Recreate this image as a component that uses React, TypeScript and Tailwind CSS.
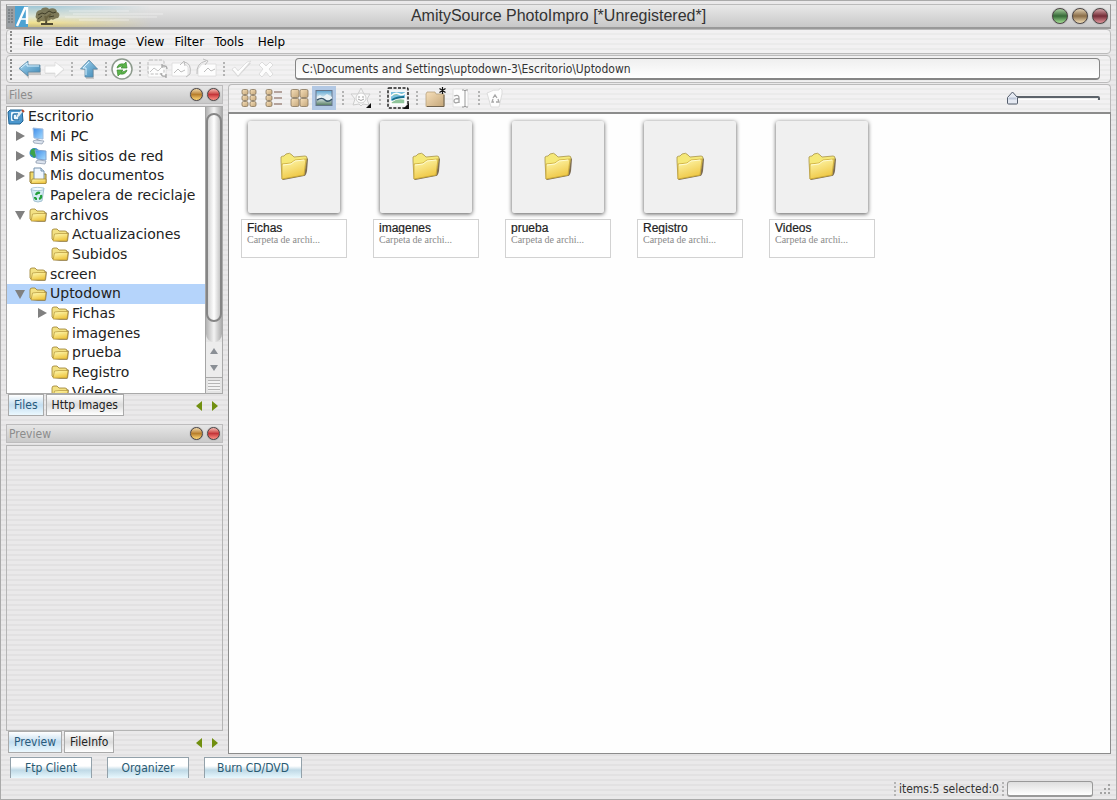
import type { ReactNode } from "react";
import clsx from "clsx";

const stripes =
  "bg-[repeating-linear-gradient(to_bottom,#eae9ea_0px,#eae9ea_3px,#e2e1e2_3px,#e2e1e2_5px)]";
const lightStripes =
  "bg-[repeating-linear-gradient(to_bottom,#f2f1f2_0px,#f2f1f2_3px,#ebebeb_3px,#ebebeb_5px)]";
const tahoma = "font-['DejaVu_Sans_Condensed','DejaVu_Sans',sans-serif]";

/* Gradients shared by all icons */
function IconDefs() {
  return (
    <svg className="absolute size-0" aria-hidden="true">
      <defs>
        <linearGradient id="gold" x1="0" y1="0" x2="0.4" y2="1">
          <stop offset="0" stopColor="#fffbb4" />
          <stop offset="1" stopColor="#efc744" />
        </linearGradient>
        <linearGradient id="blue" x1="0" y1="0" x2="1" y2="1">
          <stop offset="0" stopColor="#a9d8f2" />
          <stop offset="1" stopColor="#3d87b5" />
        </linearGradient>
        <linearGradient id="screen" x1="0" y1="0" x2="1" y2="1">
          <stop offset="0" stopColor="#3d8be8" />
          <stop offset="1" stopColor="#a6dcff" />
        </linearGradient>
        <linearGradient id="tan" x1="0" y1="0" x2="1" y2="1">
          <stop offset="0" stopColor="#f7e0bb" />
          <stop offset="1" stopColor="#c4a679" />
        </linearGradient>
        <linearGradient id="sky" x1="0" y1="0" x2="0" y2="1">
          <stop offset="0" stopColor="#5ba3d0" />
          <stop offset="0.5" stopColor="#e5f1f4" />
          <stop offset="1" stopColor="#51785c" />
        </linearGradient>
      </defs>
    </svg>
  );
}

function Logo() {
  return (
    <svg viewBox="0 0 160 21" className="h-[21px] w-40" aria-hidden="true">
      <defs>
        <linearGradient id="sunset" x1="0" y1="0" x2="0" y2="1">
          <stop offset="0" stopColor="#9fc6d6" />
          <stop offset="0.5" stopColor="#dfe6d6" />
          <stop offset="0.8" stopColor="#f0e08f" />
          <stop offset="1" stopColor="#c9bd80" />
        </linearGradient>
        <linearGradient id="fade" x1="0" y1="0" x2="1" y2="0">
          <stop offset="0.2" stopColor="#fff" />
          <stop offset="0.9" stopColor="#000" />
        </linearGradient>
        <mask id="fadeMask">
          <rect width="160" height="21" fill="url(#fade)" />
        </mask>
      </defs>
      <rect width="160" height="21" fill="url(#sunset)" mask="url(#fadeMask)" />
      <path d="M62 5h60M66 8h90M58 11h92M72 14h50" stroke="#fff" opacity=".45" />
      <rect width="8" height="21" fill="#9a9fa3" />
      <path d="M2 3v15M5 3v15" stroke="#62686d" strokeDasharray="2 1" />
      <rect x="8" width="13" height="21" fill="#4da3d2" />
      <path d="M10 20 18 2h2v16" stroke="#fff" strokeWidth="2.400" fill="none" />
      <path d="M14 13h6" stroke="#fff" strokeWidth="1.600" />
      <path d="M39 18c1-3 0-5-1-8M39 13c1-3 3-3 5-5M34 18h12" stroke="#504a30" strokeWidth="2" fill="none" />
      <path
        d="M29 9c0-4 3-5 5-5 1-3 6-3 8-1 4-2 8 0 8 3 3 1 3 4 1 6-3 0-5 3-7 1-2 3-4 1-6 2-2 1-4-1-5 1-3 1-4-1-3-3-1-1-2-2-1-4z"
        fill="#6d6643"
        opacity=".85"
      />
      <path d="M31 9l4-2 3 1 4-3 4 2 3-1M31 13l4-3M42 11l5-1" stroke="#3f3d28" fill="none" />
    </svg>
  );
}

function Folder({ className = "h-4 w-[18px]" }: { className?: string }) {
  return (
    <svg viewBox="0 0 18 16" className={className} aria-hidden="true">
      <path d="M2 15h14l1-1 1-8-2-1v8z" fill="#766339" opacity=".7" />
      <path d="M1 4q0-2 2-2h3l2 2h6q2 0 2 2v7H2L1 12z" fill="#f3e184" stroke="#9a7e2c" strokeWidth=".8" />
      <path d="M2 14 3.500 7 8 6.500h9L16 14z" fill="url(#gold)" stroke="#b3943a" strokeWidth=".7" />
    </svg>
  );
}

function BigFolder() {
  return (
    <svg viewBox="0 0 30 30" className="size-[30px]" aria-hidden="true">
      <path d="m4 28 21-4q2 0 3-5l1-12-2-2-2 17-22 5z" fill="#5f4a2a" opacity=".8" />
      <path d="M2 9V5q1-1 3-1l2-2q4-2 6 1l2 2 11-1q2 0 2 2l-3 17L3 27 2 9z" fill="#f5e878" stroke="#a8944a" strokeWidth=".8" />
      <path d="m3 27 0-15 9-1 4-3 11-1-2 16z" fill="url(#gold)" stroke="#c9a737" strokeWidth=".8" />
      <path d="m4 13 8-1 4-3 9-1" stroke="#fffbd0" fill="none" />
    </svg>
  );
}

function DesktopIcon() {
  return (
    <svg viewBox="0 0 18 18" className="size-[18px]" aria-hidden="true">
      <path d="M3 2h12l1 11-3 3H2L1 4z" fill="#4b98cf" stroke="#226493" />
      <rect x="4" y="4" width="9" height="9" rx="1" fill="#eaf7ff" />
      <path d="M11 6H7q-1 0-1 2v2q0 2 2 2h4V8H9" stroke="#2673ab" strokeWidth="1.500" fill="none" />
      <path d="m10 9 5-6" stroke="#e4ecf0" strokeWidth="2" />
      <path d="m15 2 2 2" stroke="#b5482a" strokeWidth="2" />
    </svg>
  );
}

function ComputerIcon() {
  return (
    <svg viewBox="0 0 18 18" className="size-[18px]" aria-hidden="true">
      <path d="m4 1 10 1v10l-9-1z" fill="url(#screen)" stroke="#9dbbe0" />
      <path d="m8 12 3 1 1 2-6-1z" fill="#8f9fb8" />
      <path d="m4 14 3-1 8 1-2 3-8-1z" fill="#dbe3ee" stroke="#8593a8" strokeWidth=".7" />
    </svg>
  );
}

function NetworkIcon() {
  return (
    <svg viewBox="0 0 18 18" className="size-[18px]" aria-hidden="true">
      <circle cx="5.500" cy="6" r="5" fill="#3489c6" />
      <path d="M2 3q3-3 5 0l-1 3 2 1-3 4-2-3-2-1z" fill="#3ca34a" />
      <path d="m6 3 11 1v9l-9-1z" fill="url(#screen)" stroke="#7fa3d0" />
      <path d="m7 14 3-1 7 1-1 3-9-1z" fill="#dbe3ee" stroke="#8593a8" strokeWidth=".7" />
    </svg>
  );
}

function DocumentsIcon() {
  return (
    <svg viewBox="0 0 18 18" className="size-[18px]" aria-hidden="true">
      <path d="M1 5h4l1 2h11v9H2l-1-1z" fill="#efd96a" stroke="#8f762d" />
      <path d="M5 1h7l3 3v9H5z" fill="#f0f7ff" stroke="#7793ad" />
      <path d="M12 1v3h3" fill="#cde2f5" stroke="#7793ad" />
      <path d="M2 16.500 3 12h14v4.500z" fill="url(#gold)" stroke="#a88a30" strokeWidth=".8" />
    </svg>
  );
}

function BinIcon() {
  return (
    <svg viewBox="0 0 18 18" className="size-[18px]" aria-hidden="true">
      <path d="m2 3 13-1-2 13q-4 2-8 0z" fill="#d5ebf4" stroke="#93b5c8" strokeWidth=".8" />
      <ellipse cx="8.500" cy="3" rx="6.500" ry="1.600" fill="#f2fbff" stroke="#93b5c8" strokeWidth=".7" />
      <path d="M7 9q1-3 4-2M12 9q1 3-2 4M8 13q-2 0-2-2" stroke="#25a03c" strokeWidth="2.200" fill="none" />
    </svg>
  );
}

type TreeNode = {
  label: string;
  icon: ReactNode;
  indent: string;
  arrow?: "right" | "down";
  selected?: boolean;
};

const tree: TreeNode[] = [
  { label: "Escritorio", icon: <DesktopIcon />, indent: "pl-0" },
  { label: "Mi PC", icon: <ComputerIcon />, indent: "pl-2", arrow: "right" },
  { label: "Mis sitios de red", icon: <NetworkIcon />, indent: "pl-2", arrow: "right" },
  { label: "Mis documentos", icon: <DocumentsIcon />, indent: "pl-2", arrow: "right" },
  { label: "Papelera de reciclaje", icon: <BinIcon />, indent: "pl-[22px]" },
  { label: "archivos", icon: <Folder />, indent: "pl-2", arrow: "down" },
  { label: "Actualizaciones", icon: <Folder />, indent: "pl-11" },
  { label: "Subidos", icon: <Folder />, indent: "pl-11" },
  { label: "screen", icon: <Folder />, indent: "pl-[22px]" },
  { label: "Uptodown", icon: <Folder />, indent: "pl-2", arrow: "down", selected: true },
  { label: "Fichas", icon: <Folder />, indent: "pl-[30px]", arrow: "right" },
  { label: "imagenes", icon: <Folder />, indent: "pl-11" },
  { label: "prueba", icon: <Folder />, indent: "pl-11" },
  { label: "Registro", icon: <Folder />, indent: "pl-11" },
  { label: "Videos", icon: <Folder />, indent: "pl-11" },
];

function TreeRow({ node }: { node: TreeNode }) {
  return (
    <li className={clsx("flex min-h-0", node.selected && "bg-[#b5d4fb]")}>
      <button
        type="button"
        className={clsx("flex min-h-0 w-full items-center whitespace-nowrap text-left", node.indent)}
      >
        {node.arrow && (
          <svg viewBox="0 0 10 10" className="mr-1 size-[10px] shrink-0" aria-hidden="true">
            <path d={node.arrow === "right" ? "M1 0v10l9-5z" : "M0 1h10L5 10z"} fill="#808080" />
          </svg>
        )}
        <span className="flex w-[21px] shrink-0">{node.icon}</span>
        {node.label}
      </button>
    </li>
  );
}

function Orb({ label, className }: { label: string; className: string }) {
  return (
    <button
      type="button"
      aria-label={label}
      className={clsx("rounded-full border border-[#4b4444] shadow-[0_0_1px_#666]", className)}
    />
  );
}

function PanelHeader({ title }: { title: string }) {
  return (
    <div
      className={clsx(
        "flex h-[19px] shrink-0 items-center gap-1 border border-[#bdbcbd] bg-linear-to-b from-[#e6e6e6] to-[#c9c9c9] px-0.5 text-[12px] leading-4 text-[#8c8c8c]",
        tahoma,
      )}
    >
      <h2 className="flex-1">{title}</h2>
      <Orb
        label={`Undock ${title}`}
        className="size-[13px] bg-linear-to-b from-[#f0d9a8] via-[#b87f2c] to-[#ffd978]"
      />
      <Orb
        label={`Close ${title}`}
        className="size-[13px] bg-linear-to-b from-[#f3b7b1] via-[#c4353a] to-[#ff8f86]"
      />
    </div>
  );
}

function Tabs({ items }: { items: string[] }) {
  return (
    <div className={clsx("flex h-[23px] shrink-0 items-start gap-0.5 pl-0.5 text-[12px]", tahoma)}>
      {items.map((item, i) => (
        <button
          key={item}
          type="button"
          className={clsx(
            "h-[22px] whitespace-nowrap border border-[#aaa] px-[5px]",
            i === 0
              ? "bg-linear-to-b from-white via-[#c4def0] to-[#ecf9ff] text-[#285a7c]"
              : "bg-linear-to-b from-white via-[#dcdcdc] to-white text-[#222]",
          )}
        >
          {item}
        </button>
      ))}
      <div className="ml-auto flex h-full items-center gap-2 pr-1">
        <button type="button" aria-label="Previous tab">
          <svg viewBox="0 0 8 10" className="h-[10px] w-2">
            <path d="M7 0v10L1 5z" fill="#718f10" />
          </svg>
        </button>
        <button type="button" aria-label="Next tab">
          <svg viewBox="0 0 8 10" className="h-[10px] w-2">
            <path d="M1 0v10l6-5z" fill="#718f10" />
          </svg>
        </button>
      </div>
    </div>
  );
}

function Scrollbar() {
  return (
    <div className="flex w-[17px] shrink-0 flex-col border-l border-[#a5a5a5] bg-[#e4e4e4]" aria-hidden="true">
      <div className="flex h-[235px] flex-col rounded-b-full bg-linear-to-r from-[#b2b2b2] via-[#f3f3f3] to-[#a9a9a9] pt-1.5">
        <div className="h-[209px] rounded-full border-2 border-[#858585] bg-linear-to-r from-[#d5d5d5] via-white to-[#c6c6c6]" />
      </div>
      <div className="flex h-9 flex-col items-center justify-around border-b border-[#aaa] bg-[#ececec]">
        <svg viewBox="0 0 8 6" className="h-1.5 w-2">
          <path d="M4 0l4 6H0z" fill="#8a8f95" />
        </svg>
        <svg viewBox="0 0 8 6" className="h-1.5 w-2">
          <path d="M4 6l4-6H0z" fill="#8a8f95" />
        </svg>
      </div>
      <div className="m-0.5 flex-1 bg-[repeating-linear-gradient(to_bottom,#b5b5b5_0px,#b5b5b5_1px,#f2f2f2_1px,#f2f2f2_3px)]" />
    </div>
  );
}

function ToolButton({ label, active, children }: { label: string; active?: boolean; children: ReactNode }) {
  return (
    <button
      type="button"
      aria-label={label}
      className={clsx("flex size-6 shrink-0 items-center justify-center", active && "bg-[#b2c8e4]")}
    >
      <svg viewBox="0 0 24 24" className="size-6" fill="none">
        {children}
      </svg>
    </button>
  );
}

function Separator({ className = "w-2" }: { className?: string }) {
  return (
    <div className={clsx("flex shrink-0 justify-center", className)} aria-hidden="true">
      <div className="h-3.5 border-l-2 border-dotted border-[#b3b3b3]" />
    </div>
  );
}

function Grip() {
  return <div className="h-[21px] shrink-0 border-l-2 border-dotted border-[#8b8b8b]" aria-hidden="true" />;
}

const tiles = { fill: "url(#tan)", stroke: "#85755c", strokeWidth: 0.8 };

function NavTools() {
  return (
    <>
      <ToolButton label="Back">
        <path d="M3 13 11 7v4h12v7H11v4z" fill="#777" opacity=".35" />
        <path d="M1 11.500 10 4v4h12v7H10v4z" fill="url(#blue)" stroke="#5b88a5" strokeWidth=".8" />
        <path d="M3 11 9 6v3h12" stroke="#d8f1ff" />
      </ToolButton>
      <ToolButton label="Forward">
        <path d="M21 13 12 6v4H2v7h10v4z" fill="#999" opacity=".25" />
        <path d="M21 12 12 5v4H2v7h10v4z" fill="#fdfdfd" stroke="#dcdcdc" strokeWidth=".8" />
      </ToolButton>
      <Separator />
      <ToolButton label="Up">
        <path d="m13 4 8 9h-4v9H9v-9H5z" fill="#777" opacity=".35" />
        <path d="m12 3 8.500 9H16v8H8v-8H3.500z" fill="url(#blue)" stroke="#5b88a5" strokeWidth=".8" />
        <path d="m12 5-6 6h3v7" stroke="#d8f1ff" />
      </ToolButton>
      <Separator />
      <ToolButton label="Refresh">
        <circle cx="11" cy="12" r="10" fill="#fdfdfd" stroke="#8c9a8c" strokeWidth="1.500" />
        <path d="M6 11q1-5 7-4l2-2 1 6h-6l2-2q-3 0-6 2z" fill="#5bb54a" stroke="#3f8b34" strokeWidth=".7" />
        <path d="M16 13q-1 5-7 4l-2 2-1-6h6l-2 2q3 0 6-2z" fill="#5bb54a" stroke="#3f8b34" strokeWidth=".7" />
      </ToolButton>
      <Separator />
      <ToolButton label="Move to">
        <path d="M3 8h18v12H3z" fill="#fdfdfd" stroke="#dadada" strokeWidth=".8" />
        <rect x="3" y="3" width="16" height="14" rx="2" stroke="#bcbcbc" strokeDasharray="3 1.500" />
        <path d="m5 15 4-4 4 3 3-3" stroke="#c4c4c4" />
        <path d="M22 12q0-4-5-3M16 16q0 4 5 3M17 7v4M21 17v4" stroke="#a5a5a5" strokeWidth="1.300" />
      </ToolButton>
      <ToolButton label="Rotate left">
        <path d="M2 6h12l4 4v9H2z" fill="#fdfdfd" stroke="#dadada" strokeWidth=".8" />
        <path d="M4 16l4-4 3 3 4-2M10 8l4-4 1 5M14 5q8 1 6 12l-4 3" stroke="#bdbdbd" />
      </ToolButton>
      <ToolButton label="Rotate right">
        <path d="M7 7h14v12H3v-7z" fill="#fdfdfd" stroke="#dadada" strokeWidth=".8" />
        <path d="M9 15l4-4 3 3 4-2M2 17Q1 6 11 4M8 2l5 2-3 4" stroke="#bdbdbd" />
      </ToolButton>
      <Separator />
      <ToolButton label="Accept">
        <path d="m3 13 6 7L22 6l-4 0-9 9-3-4z" fill="#999" opacity=".3" />
        <path d="m3 12 6 7L22 4l-4 1-9 9-3-4z" fill="#fdfdfd" stroke="#dadada" strokeWidth=".8" />
      </ToolButton>
      <ToolButton label="Cancel">
        <path
          d="m5 8 3-3 4 4 4-4 3 3-4 4 4 5-3 3-4-5-4 5-3-3 4-5z"
          fill="#fdfdfd"
          stroke="#d6d6d6"
          strokeWidth=".8"
        />
      </ToolButton>
    </>
  );
}

function ViewTools() {
  return (
    <>
      <ToolButton label="Small icons">
        {[3, 9, 15].map((y) => (
          <g key={y} {...tiles}>
            <rect x="5" y={y + 0.5} width="6" height="5" rx="1.500" />
            <rect x="13" y={y + 0.5} width="6" height="5" rx="1.500" />
          </g>
        ))}
      </ToolButton>
      <ToolButton label="List">
        {[3, 9, 15].map((y) => (
          <g key={y}>
            <rect x="4" y={y + 0.5} width="6" height="5" rx="1.500" {...tiles} />
            <path d={`M12 ${y + 3}h8`} stroke="#ad9a94" strokeWidth="1.800" />
          </g>
        ))}
      </ToolButton>
      <ToolButton label="Large icons">
        {[3, 12].map((y) => (
          <g key={y} {...tiles}>
            <rect x="4" y={y + 0.5} width="8" height="8" rx="1.500" />
            <rect x="13" y={y + 0.5} width="8" height="8" rx="1.500" />
          </g>
        ))}
      </ToolButton>
      <ToolButton label="Thumbnails" active>
        <rect x="4" y="4.500" width="16" height="15" fill="url(#sky)" stroke="#65758a" />
        <path d="M5 11l3-2 3 2 4-3 5 3v3H5z" fill="#e8f1f5" />
        <path d="M5 14q5-3 8 0t7-1" stroke="#38556a" strokeWidth="1.500" />
      </ToolButton>
      <Separator className="w-[11px]" />
      <ToolButton label="Effects">
        <path d="m12 2 3 6 6 0-3 5 2 6-6-1-2 2-2-2-6 1 2-6-4-5 7 0z" fill="#f6f6f6" stroke="#cdcdcd" />
        <circle cx="12" cy="12" r="5" fill="#fdfdfd" stroke="#cfcfcf" />
        <path d="M10 10v2M14 10v2M9 13q3 3 6 0" stroke="#a3a3a3" />
        <path d="M22 17v5h-5z" fill="#111" />
      </ToolButton>
      <Separator className="w-[11px]" />
      <ToolButton label="Select images">
        <rect x="2" y="2" width="20" height="20" rx="1" stroke="#222" strokeWidth="1.500" strokeDasharray="3 1.500" />
        <rect x="4" y="4" width="16" height="16" fill="#f4f8fa" />
        <rect x="5" y="6" width="14" height="12" fill="#7cc1e0" />
        <path d="M5 10q4-4 8-2t6-1M5 16q6-5 14-3v5H5z" stroke="#fff" strokeWidth="1.500" fill="#8fc49a" />
        <path d="M6 14q5-3 12-3" stroke="#17708f" strokeWidth="2" />
        <path d="M23 17v6h-6z" fill="#111" />
      </ToolButton>
      <Separator className="w-[11px]" />
      <ToolButton label="New folder">
        <path d="M3 20.500h18V8h-8l-1-2H4l-1 2z" fill="url(#tan)" stroke="#b7a27f" strokeWidth=".8" />
        <path d="M4 20.500h17V9" stroke="#6f624e" />
        <path d="M19.500 1v7M16.500 2.500l6 4M22.500 2.500l-6 4" stroke="#111" strokeWidth="1.200" />
      </ToolButton>
      <ToolButton label="Rename">
        <path d="M5 3h12l3 3v15H5z" fill="#fdfdfd" stroke="#e0e0e0" />
        <path d="M6 10q5-2 5 2v5M11 13q-5-1-5 2t5 1" stroke="#a5a5a5" strokeWidth="1.300" />
        <path d="M14 4h2l1 1 1-1h2M17 5v15M14 21h2l1-1 1 1h2" stroke="#999" />
      </ToolButton>
      <Separator className="w-[11px]" />
      <ToolButton label="Delete">
        <path d="M2 7q7-4 12-3l1-2 2 2v4l-3 13H6z" fill="#fdfdfd" stroke="#dcdcdc" />
        <path d="M8 12l2-3 2 3M13 13l1 3h-3M9 16H7l1-3" stroke="#a7a7a7" strokeWidth="1.300" />
      </ToolButton>
    </>
  );
}

function SizeSlider() {
  return (
    <div className="relative ml-auto h-4 w-[94px] shrink-0">
      <svg viewBox="0 0 94 16" className="h-4 w-full" aria-hidden="true">
        <path d="M10 7h82q1 0 1 1v2" stroke="#5d636b" strokeWidth="2" fill="none" />
        <path d="M10 9.500h81" stroke="#fff" />
        <path d="M1.500 13V7.500L6.500 2l5 5.500V13q0 1-1 1h-8q-1 0-1-1z" fill="#e5e9f2" stroke="#555e6d" />
        <path d="M2.500 8.500h8" stroke="#bfc8da" strokeWidth="2" />
      </svg>
      <input
        type="range"
        aria-label="Thumbnail size"
        min={0}
        max={100}
        defaultValue={0}
        className="absolute inset-0 size-full cursor-pointer opacity-0"
      />
    </div>
  );
}

function Thumbnail({ name }: { name: string }) {
  return (
    <li className="w-[106px]">
      <button type="button" className="flex w-full flex-col items-center gap-1.5 text-left">
        <span className="flex size-[92px] items-center justify-center rounded-xs bg-[#f0f0f0] shadow-[0_1px_4px_#555]">
          <BigFolder />
        </span>
        <span className="flex h-[39px] w-full flex-col border border-[#d2d2d2] bg-white px-[5px] pt-0.5">
          <span className="h-3 overflow-hidden font-['Liberation_Sans',sans-serif] text-[12px] leading-[13px] text-[#222] [-webkit-text-stroke:0.2px_#222]">
            {name}
          </span>
          <span className="font-['Liberation_Serif',serif] text-[10px] leading-3 text-[#8a8a8a]">
            Carpeta de archi...
          </span>
        </span>
      </button>
    </li>
  );
}

const menus = ["File", "Edit", "Image", "View", "Filter", "Tools", "Help"];

export default function App() {
  return (
    <div
      className={clsx(
        "flex min-h-screen flex-col border border-[#aaa] px-[5px] pt-[3px] font-['DejaVu_Sans',sans-serif] text-black",
        stripes,
      )}
    >
      <IconDefs />

      <header className="grid h-[25px] shrink-0 grid-cols-[1fr_auto_1fr] items-center border border-b-2 border-[#999] border-t-[#bbb] bg-linear-to-b from-[#e9e9e9] to-[#c8c8c8]">
        <Logo />
        <h1 className="font-['Liberation_Sans',sans-serif] text-[16px] leading-5 text-[#333]">
          AmitySource PhotoImpro [*Unregistered*]
        </h1>
        <div className="flex justify-end gap-1 pr-0.5">
          <Orb label="Minimize" className="size-4 bg-linear-to-b from-[#a9cfa2] via-[#356a37] to-[#a6e398]" />
          <Orb label="Maximize" className="size-4 bg-linear-to-b from-[#e3d3b6] via-[#8a6d48] to-[#f6e3bb]" />
          <Orb label="Close" className="size-4 bg-linear-to-b from-[#d3a5aa] via-[#742c38] to-[#e59aa0]" />
        </div>
      </header>

      <nav
        className={clsx(
          "flex h-[25px] shrink-0 items-center rounded-sm border border-[#bbb] pl-[3px] text-[12px]",
          lightStripes,
        )}
      >
        <Grip />
        <div className="flex gap-[10px] pl-[11px]">
          {menus.map((menu) => (
            <button key={menu} type="button" className="first:pr-0.5 last:pl-1">
              {menu}
            </button>
          ))}
        </div>
      </nav>

      <div
        className={clsx(
          "mt-px flex h-7 shrink-0 items-center gap-px rounded-sm border border-[#bbb] pl-[3px] pr-[10px]",
          lightStripes,
        )}
      >
        <Grip />
        <div className="flex items-center gap-px pl-[5px]">
          <NavTools />
        </div>
        <input
          type="text"
          aria-label="Address"
          defaultValue="C:\Documents and Settings\uptodown-3\Escritorio\Uptodown"
          className={clsx(
            "ml-4 h-[22px] min-w-0 flex-1 rounded-[4px] border border-b-2 border-[#858585] bg-linear-to-b from-[#efefef] to-white px-1.5 text-[12px] text-[#333]",
            tahoma,
          )}
        />
      </div>

      <div className="flex flex-1 gap-[5px] pt-px">
        <aside className="flex w-[217px] shrink-0 flex-col pt-px">
          <PanelHeader title="Files" />
          <div className="mt-0.5 flex h-72 shrink-0 overflow-hidden border border-[#aaa] bg-white">
            <ul className="grid h-[295px] min-w-0 flex-1 auto-rows-fr text-[14px] leading-[19px] text-[#222]">
              {tree.map((node) => (
                <TreeRow key={node.label} node={node} />
              ))}
            </ul>
            <Scrollbar />
          </div>
          <Tabs items={["Files", "Http Images"]} />
          <div className="h-[7px] shrink-0" />
          <PanelHeader title="Preview" />
          <div className="mt-0.5 flex-1 border border-[#b5b5b5]" />
          <Tabs items={["Preview", "FileInfo"]} />
        </aside>

        <main className="flex min-w-0 flex-1 flex-col">
          <div
            className={clsx(
              "flex h-7 shrink-0 items-center gap-px rounded-t-sm border border-b-0 border-[#bbb] pb-0.5 pl-2 pr-[10px]",
              lightStripes,
            )}
          >
            <ViewTools />
            <SizeSlider />
          </div>
          <div className="flex-1 border border-t-2 border-[#8c8c8c] bg-[#fefefe]">
            <ul className="flex flex-wrap gap-x-[26px] gap-y-4 pl-3 pt-[7px]">
              {["Fichas", "imagenes", "prueba", "Registro", "Videos"].map((name) => (
                <Thumbnail key={name} name={name} />
              ))}
            </ul>
          </div>
        </main>
      </div>

      <footer className={clsx("flex h-[45px] shrink-0 items-start pl-1 pt-[3px] text-[12px]", tahoma)}>
        <div className="flex gap-[15px]">
          {["Ftp Client", "Organizer", "Burn CD/DVD"].map((label) => (
            <button
              key={label}
              type="button"
              className="h-[21px] min-w-[82px] border border-b-0 border-[#93a1aa] bg-linear-to-b from-white from-40% via-[#bfd9e6] via-60% to-[#e8f8fe] px-3 text-[#285a72]"
            >
              {label}
            </button>
          ))}
        </div>
        <div className="ml-auto flex items-center self-end pb-px">
          <Separator />
          <p className="text-[#333]">items:5 selected:0</p>
          <Separator />
          <div className="h-4 w-[86px] rounded-[3px] border border-b-2 border-[#999] bg-linear-to-b from-[#dedede] to-white" />
          <svg viewBox="0 0 12 12" className="ml-1.5 size-3" aria-hidden="true">
            <path d="M9 1h2v2H9zM5 5h2v2H5zM9 5h2v2H9zM1 9h2v2H1zM5 9h2v2H5zM9 9h2v2H9z" fill="#a4a4a4" />
          </svg>
        </div>
      </footer>
    </div>
  );
}
